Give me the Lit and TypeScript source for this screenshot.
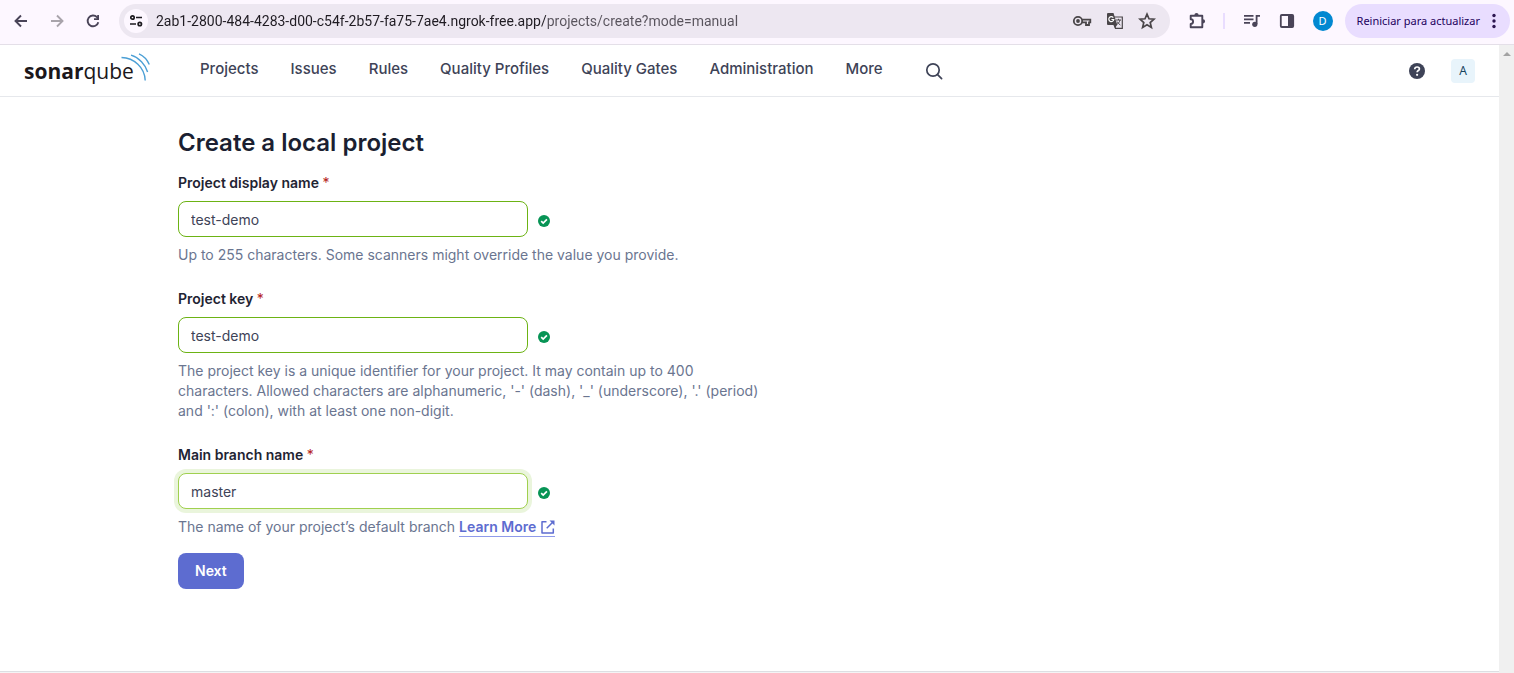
import { LitElement, html, svg, css, nothing } from "lit";
import { customElement } from "lit/decorators.js";
import { classMap } from "lit/directives/class-map.js";

const reset = css`
  * { box-sizing: border-box; }
  svg { display: block; flex: none; }
  button, a, input { font: inherit; color: inherit; }
  button { border: 0; padding: 0; background: none; cursor: pointer; }
  a { text-decoration: none; }
`;

const icon = (w: number, h: number, box: string, body: unknown) => html`
  <svg width=${w} height=${h} viewBox=${box} fill="none" aria-hidden="true">${body}</svg>`;

const back = icon(16, 16, "0 0 16 16", svg`<path d="M8 2.5 2.5 8 8 13.500M2.800 8H14" stroke="#4a4458" stroke-width="1.900"/>`);
const forward = icon(16, 16, "0 0 16 16", svg`<path d="M8 2.500 13.500 8 8 13.500M13.200 8H2" stroke="#a9a4ab" stroke-width="1.900"/>`);
const reload = icon(16, 16, "0 0 16 16", svg`<path d="M13.300 9.200A5.400 5.400 0 1 1 12 4.200L13.500 5.800" stroke="#4a4458" stroke-width="1.900"/><path d="M14 2v5H9V5.200h3.200V2z" fill="#4a4458"/>`);
const tune = icon(16, 16, "0 0 16 16", svg`<g stroke="#1d1b20" stroke-width="1.700"><circle cx="4.500" cy="4.500" r="1.700"/><path d="M8 4.500h6M2 11h6"/><circle cx="11.800" cy="11" r="1.700"/></g>`);
const key = icon(20, 16, "0 0 20 16", svg`<g stroke="#4a4649" stroke-width="1.800"><circle cx="6" cy="8" r="4.200"/><path d="M9.800 6.700H18.300V9.300H17V12H14V9.300H9.800"/></g><circle cx="6" cy="8" r="1.900" fill="#4a4649"/>`);
const translate = icon(18, 18, "0 0 18 18", svg`
  <path d="M8 5h8.300v11.300H9.500L8 12" fill="#ede7f1" stroke="#4a4649" stroke-width="1.200"/>
  <path d="M10 8h5M12.500 6.800V8M14 8c-.500 2.200-1.800 3.600-3.500 4.800M11.200 9.600c.700 1.400 1.800 2.500 3.200 3.400" stroke="#4a4649" stroke-width="1"/>
  <path d="M2 1h5.500L11.300 13H2a1 1 0 0 1-1-1V2a1 1 0 0 1 1-1z" fill="#4a4649"/>
  <path d="M7.300 5.600A2.500 2.500 0 1 0 7.800 7.500H5.400" stroke="#fff" stroke-width="1.200"/>
  <path d="M7.500 13H11l-2 3.300z" fill="#4a4649"/>`);
const star = icon(18, 18, "0 0 18 18", svg`<path d="m9 2.200 2 4.600 5 .4-3.800 3.300 1.200 4.900L9 12.800l-4.400 2.600 1.200-4.900L2 7.200l5-.4z" stroke="#4a4649" stroke-width="1.700"/>`);
const puzzle = icon(20, 20, "0 0 20 20", svg`<path d="M3.700 4.700H15.300V16.300H3.700V13a2.300 2.300 0 0 0 0-4.800z" stroke="#4a4458" stroke-width="1.900" stroke-linejoin="round"/><path d="M7.400 4a2.100 2.100 0 0 1 4.200 0zM16 8.200a2.100 2.100 0 0 1 0 4.200z" fill="#4a4458"/>`);
const queue = icon(18, 16, "0 0 18 16", svg`<path d="M1 2.800h9.500M1 6.300h9.500M1 9.800h6M13.600 11V2.800H17" stroke="#4a4458" stroke-width="1.800"/><circle cx="11.800" cy="11.300" r="2.600" fill="#4a4458"/>`);
const panel = icon(16, 16, "0 0 16 16", svg`<rect x="1.800" y="2" width="12.400" height="12" rx="1" stroke="#4a4458" stroke-width="1.800"/><path d="M9 2h5v12H9z" fill="#4a4458"/>`);
const dots = icon(4, 16, "0 0 4 16", svg`<g fill="#2c1550"><circle cx="2" cy="2.500" r="1.700"/><circle cx="2" cy="8" r="1.700"/><circle cx="2" cy="13.500" r="1.700"/></g>`);
const search = icon(18, 18, "0 0 18 18", svg`<g stroke="#3e4357" stroke-width="1.700" stroke-linecap="round"><circle cx="8" cy="8" r="6.200"/><path d="m12.600 12.600 4 4"/></g>`);
const help = icon(16, 16, "0 0 16 16", svg`<circle cx="8" cy="8" r="8" fill="#3e4357"/><path d="M5.700 6.200C5.800 4.800 6.700 4 8.100 4s2.300.8 2.300 1.900c0 1.600-2.300 1.700-2.300 3.400" stroke="#fff" stroke-width="1.700"/><circle cx="8.100" cy="11.800" r="1.100" fill="#fff"/>`);
const check = icon(12, 12, "0 0 12 12", svg`<circle cx="6" cy="6" r="6" fill="#079455"/><path d="m3.200 6.100 2 2 3.700-3.800" stroke="#fff" stroke-width="1.700"/>`);
const external = icon(14, 14, "0 0 14 14", svg`<path d="M5.500 1.700H1V13h11.300V8.500" stroke="#5d6cd0" stroke-width="1.500" stroke-linejoin="round"/><path d="M5.700 8.300 12 2" stroke="#5d6cd0" stroke-width="1.500"/><path d="M8.500.5h5v5z" fill="#5d6cd0"/>`);
const waves = icon(29, 28, "0 0 29 28", svg`<g stroke="#4b9fd5" stroke-width="1.400"><path d="M.5 4.500C13 4.800 23.800 14.500 24.200 27.500"/><path d="M10 2.200C18 4.500 24.500 11.500 26.600 19"/><path d="M18 .8c4.500 2 8.300 6 10.300 10.700"/></g>`);

@customElement("browser-bar")
class BrowserBar extends LitElement {
  static styles = [reset, css`
    :host { flex: none; display: flex; align-items: center; height: 45px; padding: 0 4px 3px 13px; background: #fdf7ff; border-bottom: 1px solid #e4dfe8; font-family: "Noto Sans", "Open Sans", sans-serif; }
    .steps { display: flex; gap: 20px; margin-right: 18px; }
    .address { flex: 1; display: flex; align-items: center; gap: 8px; height: 34px; padding: 0 14px 0 5px; border-radius: 17px; background: #ede7f1; }
    .site { display: grid; place-items: center; width: 24px; height: 24px; border-radius: 50%; background: #fdf7ff; }
    .url { flex: 1; min-width: 0; height: 24px; padding: 0; border: 0; outline: 0; font-family: Roboto, sans-serif; font-size: 14px; color: transparent; background: linear-gradient(90deg, #1f1b22 390px, #58535c 390px) text; }
    .marks { display: flex; align-items: center; gap: 14px; }
    .tools { display: flex; align-items: center; margin: 0 12px 0 17px; gap: 18px; }
    .rule { width: 2px; height: 16px; background: #e9ddff; margin-left: -2px; }
    .profile { width: 20px; height: 20px; border-radius: 50%; background: #0288d1; color: #fff; font-size: 11px; }
    .update { display: flex; align-items: center; gap: 12px; height: 34px; padding: 0 14px 0 12px; border-radius: 17px; background: #e9ddff; color: #22005d; font-size: 11px; white-space: nowrap; }
  `];
  render() {
    return html`
      <div class="steps">
        <button aria-label="Back">${back}</button>
        <button aria-label="Forward">${forward}</button>
        <button aria-label="Reload">${reload}</button>
      </div>
      <div class="address">
        <button class="site" aria-label="Site information">${tune}</button>
        <input class="url" type="text" aria-label="Address" spellcheck="false"
          .value=${"2ab1-2800-484-4283-d00-c54f-2b57-fa75-7ae4.ngrok-free.app/projects/create?mode=manual"} />
        <div class="marks">
          <button aria-label="Passwords">${key}</button>
          <button aria-label="Translate">${translate}</button>
          <button aria-label="Bookmark">${star}</button>
        </div>
      </div>
      <div class="tools">
        <button aria-label="Extensions">${puzzle}</button>
        <span class="rule"></span>
        <button aria-label="Media">${queue}</button>
        <button aria-label="Side panel">${panel}</button>
        <button class="profile">D</button>
      </div>
      <button class="update">Reiniciar para actualizar ${dots}</button>
    `;
  }
}

@customElement("site-header")
class SiteHeader extends LitElement {
  static styles = [reset, css`
    :host { flex: none; display: flex; align-items: center; height: 52px; padding: 0 24px; border-bottom: 1px solid #e6e8ec; color: #3e4357; }
    .logo { display: flex; align-items: center; width: 126px; margin-right: 50px; color: #1b171b; font-family: "Open Sans", sans-serif; font-size: 21px; line-height: 28px; }
    .logo svg { margin: -8px 0 0 -13px; }
    nav { display: flex; gap: 32px; font-size: 15px; line-height: 20px; font-weight: 500; flex: 1; align-items: center; }
    nav a { margin-top: -4px; white-space: nowrap; }
    .search { margin-left: 10px; }
    .help { margin-right: 26px; }
    .avatar { width: 24px; height: 24px; border-radius: 4px; background: #e8f4fb; color: #17445f; font-family: "Noto Sans", sans-serif; font-size: 12px; }
  `];
  render() {
    const links = ["Projects", "Issues", "Rules", "Quality Profiles", "Quality Gates", "Administration", "More"];
    return html`
      <a class="logo" href="#"><b>sonar</b>qube${waves}</a>
      <nav>
        ${links.map((l) => html`<a href="#">${l}</a>`)}
        <button class="search" aria-label="Search">${search}</button>
      </nav>
      <button class="help" aria-label="Help">${help}</button>
      <button class="avatar">A</button>
    `;
  }
}

interface Field { id: string; label: string; value: string; focused?: boolean; note: unknown }

@customElement("project-form")
class ProjectForm extends LitElement {
  static styles = [reset, css`
    :host { display: block; max-width: 1143px; margin: 0 auto; padding: 30px 0 64px; font-size: 14px; line-height: 20px; }
    h1 { margin: 0 0 14px; font-size: 24px; line-height: 32px; font-weight: 600; color: #1b1f31; }
    form { max-width: 584px; }
    .field { margin-bottom: 24px; }
    .field:last-of-type { margin-bottom: 16px; }
    label { display: block; font-weight: 600; color: #1f2433; }
    em { font-style: normal; font-weight: 400; color: #b42318; }
    .row { display: flex; align-items: center; gap: 10px; margin: 8px 0; }
    .row svg { margin-top: 4px; }
    input { width: 350px; height: 36px; padding: 0 12px; border: 1px solid #6cb314; border-radius: 8px; outline: 0; background: #fff; color: #3e4357; }
    .focused { border-color: #a0d04f; box-shadow: 0 0 0 4px #eaf5dc; }
    .note { color: #6a7590; }
    .more { display: inline-flex; align-items: center; gap: 5px; height: 19px; border-bottom: 1px solid #8f9bea; color: #5d6cd0; font-weight: 600; }
    .next { height: 36px; padding: 0 17px; border-radius: 8px; background: #5d6cd0; color: #fff; font-weight: 600; }
  `];
  fields: Field[] = [
    { id: "name", label: "Project display name", value: "test-demo", note: "Up to 255 characters. Some scanners might override the value you provide." },
    { id: "key", label: "Project key", value: "test-demo", note: "The project key is a unique identifier for your project. It may contain up to 400 characters. Allowed characters are alphanumeric, '-' (dash), '_' (underscore), '.' (period) and ':' (colon), with at least one non-digit." },
    { id: "branch", label: "Main branch name", value: "master", focused: true, note: html`The name of your project’s default branch <a class="more" href="#">Learn More ${external}</a>` },
  ];
  render() {
    return html`
      <h1>Create a local project</h1>
      <form @submit=${(e: Event) => e.preventDefault()}>
        ${this.fields.map((f) => html`
          <div class="field">
            <label for=${f.id}>${f.label} <em>*</em></label>
            <div class="row">
              <input id=${f.id} type="text" class=${classMap({ focused: !!f.focused })} .value=${f.value} />
              ${check}
            </div>
            <div class="note">${f.note ?? nothing}</div>
          </div>`)}
        <button class="next" type="submit">Next</button>
      </form>
    `;
  }
}

@customElement("app-root")
class AppRoot extends LitElement {
  static styles = [reset, css`
    :host { display: flex; flex-direction: column; height: 100vh; overflow: hidden; background: #fff; font-family: Inter, "Liberation Sans", sans-serif; }
    .view { flex: 1; min-height: 0; display: flex; }
    .page { flex: 1; min-width: 0; display: flex; flex-direction: column; }
    main { flex: 1; }
    footer { flex: none; height: 2px; border-top: 1px solid #dddfe3; background: #f4f4f5; }
    .track { width: 15px; padding-top: 7px; background: #f0f0f0; }
    .up { width: 0; margin: 0 auto; border: solid transparent; border-width: 0 4px 4px; border-bottom-color: #a3a3a3; }
  `];
  render() {
    return html`
      <browser-bar></browser-bar>
      <div class="view">
        <div class="page">
          <site-header></site-header>
          <main><project-form></project-form></main>
          <footer></footer>
        </div>
        <div class="track" aria-hidden="true"><div class="up"></div></div>
      </div>
    `;
  }
}
